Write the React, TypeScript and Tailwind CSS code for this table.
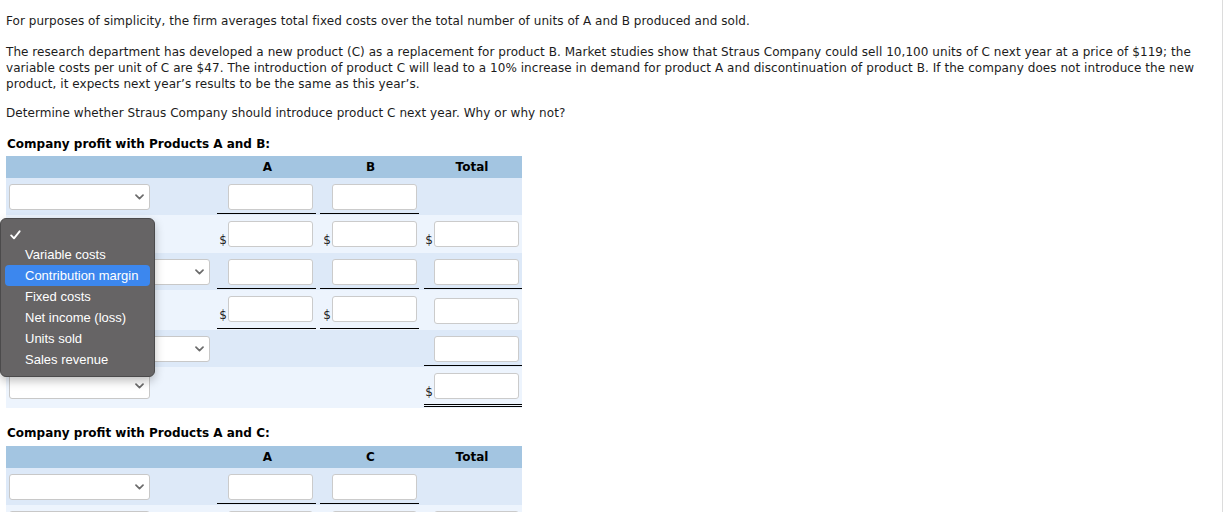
import React from "react";

type ColSpec = { pl: string; pr: string; ipr: string };
const COLS: ColSpec[] = [
  { pl: "pl-[1px]", pr: "pr-[3px]", ipr: "pr-[3px]" },
  { pl: "pl-[1px]", pr: "pr-[3px]", ipr: "pr-[2px]" },
  { pl: "pl-[2px]", pr: "pr-[0px]", ipr: "pr-[3px]" },
];

function Chevron() {
  return (
    <svg width="9" height="6" viewBox="0 0 9 6" className="block">
      <path d="M1 1.2 L4.5 4.6 L8 1.2" fill="none" stroke="#6b6b6b" strokeWidth="1.7" strokeLinecap="round" strokeLinejoin="round" />
    </svg>
  );
}

function Select({ indent }: { indent?: boolean }) {
  return (
    <div className={`flex h-full items-start pt-[6px] ${indent ? "pl-[63px]" : "pl-[3px]"}`}>
      <div className="flex h-[26px] w-[141px] items-center justify-end rounded-[3px] border border-[#c8c8c8] bg-white pr-[5px]">
        <Chevron />
      </div>
    </div>
  );
}

type Cell = { dollar?: boolean; under?: boolean; dbl?: boolean; pt?: string } | null;

function NumCell({ col, cell }: { col: number; cell: Cell }) {
  const c = COLS[col];
  if (!cell) return <div />;
  const line = cell.dbl ? "border-b-[3px] border-double border-black" : cell.under ? "border-b border-black" : "border-b border-transparent";
  return (
    <div className={`flex h-full ${c.pl} ${c.pr} pb-[1px]`}>
      <div className={`flex w-full items-start justify-end ${c.ipr} ${cell.pt ?? "pt-[6px]"} ${line}`}>
        <div className="flex items-end">
          {cell.dollar && <span className="mr-[1px] text-[12px] leading-[13px] text-[#222]">$</span>}
          <input
            readOnly
            className="h-[26px] w-[85px] rounded-[3px] border border-[#cbcbcb] bg-white outline-none"
          />
        </div>
      </div>
    </div>
  );
}

type Row = { h: string; dark: boolean; select: "none" | "left" | "indent"; cells: Cell[] };

function Table({ headers, rows }: { headers: string[]; rows: Row[] }) {
  return (
    <div className="w-[516px]">
      <div className="grid h-[22px] grid-cols-[210px_103px_103px_100px] items-center bg-[#a3c5e1] text-[12px] font-bold text-black">
        <div />
        {headers.map((h) => (
          <div key={h} className="text-center">
            {h}
          </div>
        ))}
      </div>
      {rows.map((r, i) => (
        <div
          key={i}
          className={`grid grid-cols-[210px_103px_103px_100px] ${r.h} ${r.dark ? "bg-[#dde9f8]" : "bg-[#edf4fd]"}`}
        >
          {r.select === "none" ? <div /> : <Select indent={r.select === "indent"} />}
          {r.cells.map((c, j) => (
            <NumCell key={j} col={j} cell={c} />
          ))}
        </div>
      ))}
    </div>
  );
}

const MENU = ["Variable costs", "Contribution margin", "Fixed costs", "Net income (loss)", "Units sold", "Sales revenue"];

function Menu() {
  return (
    <div className="absolute left-0 top-[218px] h-[159px] w-[155px] rounded-[6px] border border-[#4b4a4b] bg-[#666465] px-[4px] pt-[4px] shadow-[0_4px_10px_rgba(0,0,0,0.25)] font-['Liberation_Sans',Arial,sans-serif] text-[13px] text-white">
      <div className="flex h-[21px] items-center pl-[5px] pt-[2px]">
        <svg width="11" height="10" viewBox="0 0 11 10">
          <path d="M1.2 5.4 L4 8.3 L9.6 1.3" fill="none" stroke="#fff" strokeWidth="1.9" strokeLinecap="round" strokeLinejoin="round" />
        </svg>
      </div>
      {MENU.map((m) => (
        <div
          key={m}
          className={`flex h-[21px] items-center rounded-[4px] pl-[20px] ${m === "Contribution margin" ? "bg-[#3c87ee]" : ""}`}
        >
          {m}
        </div>
      ))}
    </div>
  );
}

export default function App() {
  const rows1: Row[] = [
    { h: "h-[37px]", dark: true, select: "left", cells: [{ under: true }, { under: true }, null] },
    { h: "h-[38px]", dark: false, select: "left", cells: [{ dollar: true }, { dollar: true }, { dollar: true }] },
    { h: "h-[37px]", dark: true, select: "indent", cells: [{ under: true }, { under: true }, { under: true }] },
    { h: "h-[40px]", dark: false, select: "left", cells: [{ dollar: true, under: true }, { dollar: true, under: true }, { pt: "pt-[8px]" }] },
    { h: "h-[37px]", dark: true, select: "indent", cells: [null, null, { under: true }] },
    { h: "h-[41px]", dark: false, select: "left", cells: [null, null, { dollar: true, dbl: true }] },
  ];
  const rows2: Row[] = [
    { h: "h-[37px]", dark: true, select: "left", cells: [{ under: true }, { under: true }, null] },
    { h: "h-[37px]", dark: false, select: "left", cells: [{}, {}, {}] },
  ];
  return (
    <div className="relative h-[512px] w-[1223px] overflow-hidden border-r border-[#dcdcdc] bg-white px-[6px] pt-[13px] font-['DejaVu_Sans',Verdana,sans-serif] text-[12px] leading-[16px] text-[#1c1c1c]">
      <p className="whitespace-nowrap tracking-[0.055px]">
        For purposes of simplicity, the firm averages total fixed costs over the total number of units of A and B produced and sold.
      </p>
      <p className="mt-[15px] whitespace-nowrap tracking-[0.055px]">
        <span className="block">
          The research department has developed a new product (C) as a replacement for product B. Market studies show that Straus Company could sell 10,100 units of C next year at a price of $119; the
        </span>
        <span className="block">
          variable costs per unit of C are $47. The introduction of product C will lead to a 10% increase in demand for product A and discontinuation of product B. If the company does not introduce the new
        </span>
        <span className="block">product, it expects next year’s results to be the same as this year’s.</span>
      </p>
      <p className="mt-[13px] whitespace-nowrap tracking-[0.055px]">
        Determine whether Straus Company should introduce product C next year. Why or why not?
      </p>
      <h2 className="mt-[16px] pl-[1px] text-[12px] font-bold leading-[15px] text-black">Company profit with Products A and B:</h2>
      <div className="mt-[4px]">
        <Table headers={["A", "B", "Total"]} rows={rows1} />
      </div>
      <h2 className="mt-[18px] pl-[1px] text-[12px] font-bold leading-[15px] text-black">Company profit with Products A and C:</h2>
      <div className="mt-[5px]">
        <Table headers={["A", "C", "Total"]} rows={rows2} />
      </div>
      <Menu />
    </div>
  );
}
